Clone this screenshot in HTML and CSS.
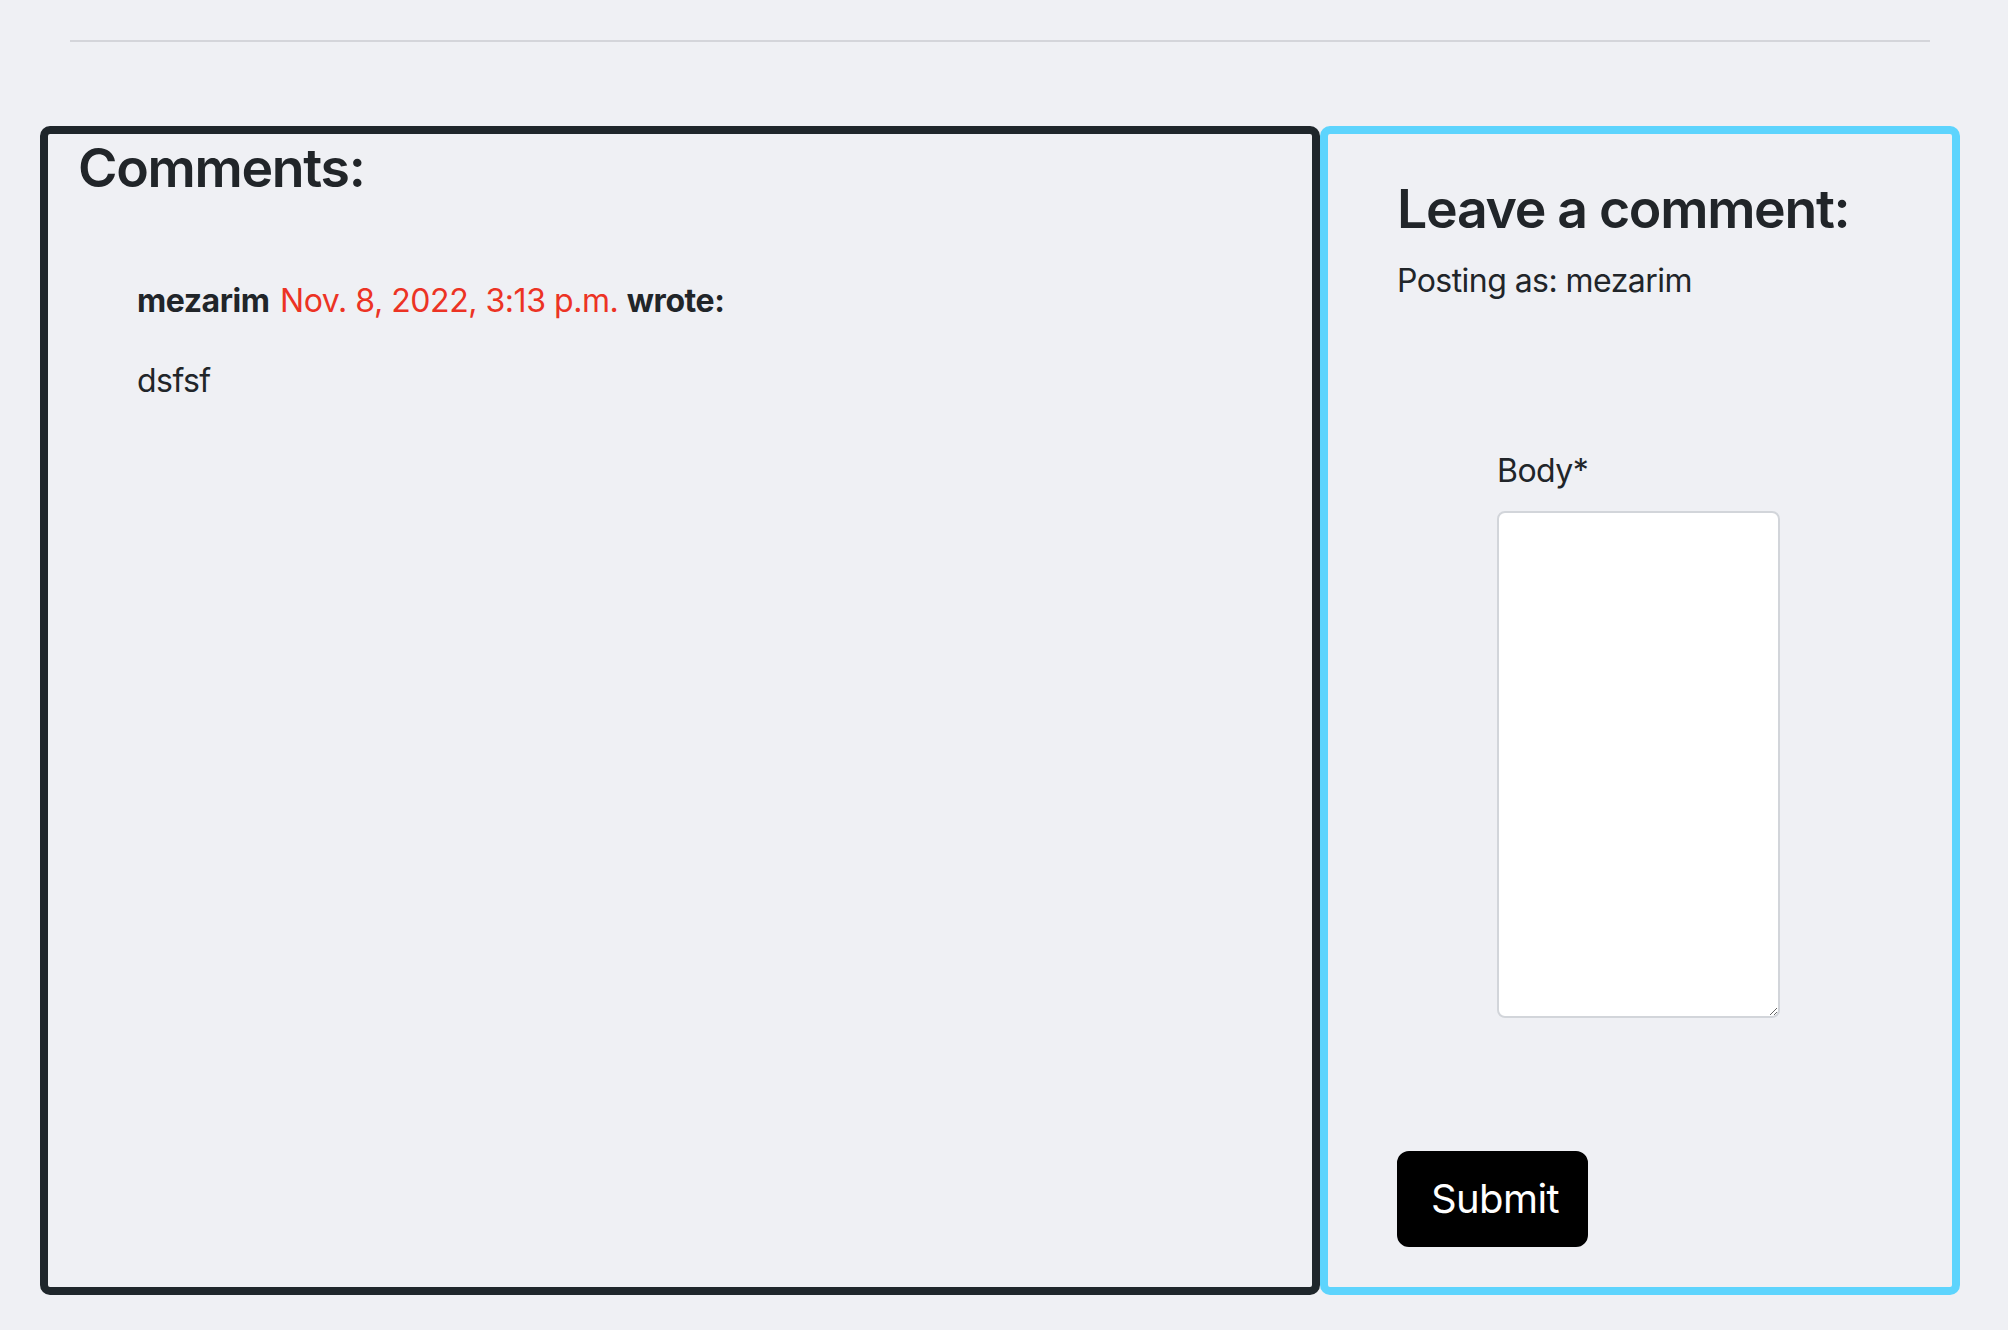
FILE: index.html
```html
<!DOCTYPE html>
<html lang="en">
<head>
<meta charset="utf-8">
<title>Comments</title>
<link rel="stylesheet" href="styles.css">
</head>
<body>
<hr class="rule">
<div class="panels">
  <section class="comments">
    <h3 class="heading">Comments:</h3>
    <div class="comment">
      <p class="meta"><strong>mezarim</strong> <span class="date">Nov. 8, 2022, 3:13 p.m.</span> <strong>wrote:</strong></p>
      <p class="text">dsfsf</p>
    </div>
  </section>
  <section class="leave">
    <h3 class="heading">Leave a comment:</h3>
    <p class="text">Posting as: mezarim</p>
    <form class="form">
      <div class="field">
        <label class="label" for="body">Body*</label>
        <textarea class="area" id="body"></textarea>
      </div>
      <button class="submit" type="button">Submit</button>
    </form>
  </section>
</div>
</body>
</html>
```
FILE: styles.css
```css
html, body {
  margin: 0;
  padding: 0;
}
body {
  background: #eff0f4;
  color: #212529;
  font-family: "Inter", "Noto Sans", "Liberation Sans", sans-serif;
  font-size: 32px;
  line-height: 1.5;
  letter-spacing: -0.55px;
}
.rule {
  margin: 40px 0 0 70px;
  width: 1860px;
  height: 0;
  border: 0;
  border-top: 2px solid #d4d5da;
}
.panels {
  display: flex;
  margin: 84px 0 0 40px;
  width: 1920px;
}
.comments {
  box-sizing: border-box;
  width: 1280px;
  border: 8px solid #1f262b;
  border-radius: 10px;
  padding: 2px 26px 0 30px;
}
.leave {
  box-sizing: border-box;
  width: 640px;
  border: 8px solid #5dd4fd;
  border-radius: 10px;
  padding: 43px 40px 40px 69px;
}
.heading {
  margin: 0 0 16px;
  font-size: 53.6px;
  font-weight: 600;
  line-height: 1.2;
  letter-spacing: -1.3px;
}
.comment {
  padding: 61px 0 0 59px;
}
.text, .meta {
  margin: 0 0 32px;
}
.meta {
  letter-spacing: -0.45px;
}
.meta strong {
  font-weight: 700;
}
.date {
  color: #ec3324;
  padding-left: 2px;
}
.form {
  margin-top: 142px;
}
.field {
  margin-left: 100px;
  display: flex;
  flex-direction: column;
  align-items: flex-start;
}
.label {
  display: block;
  margin-bottom: 16px;
}
.area {
  box-sizing: border-box;
  width: 283px;
  height: 507px;
  background: #fff;
  border: 2px solid #d2d5da;
  border-radius: 8px;
  margin: 0;
  font: inherit;
}
.submit {
  margin-top: 133px;
  background: #000;
  color: #fff;
  border: 2px solid #000;
  border-radius: 12px;
  font-family: inherit;
  font-size: 40px;
  line-height: 1.5;
  letter-spacing: -0.6px;
  padding: 16px 32px;
  width: 191px;
}
```
